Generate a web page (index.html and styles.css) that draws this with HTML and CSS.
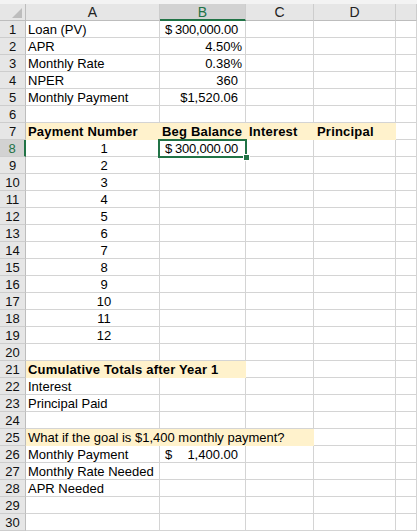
FILE: index.html
```html
<!DOCTYPE html>
<html>
<head>
<meta charset="utf-8">
<link rel="stylesheet" href="styles.css">
</head>
<body>
<div class="top"></div>
<div class="sheet">
  <div class="c h corner"><svg class="tri" width="10" height="10" viewBox="0 0 10 10"><polygon points="10,0 10,10 0,10" fill="#bdbdbd"/></svg></div>
  <div class="c h">A</div><div class="c h selcol">B</div><div class="c h">C</div><div class="c h">D</div><div class="c h"></div>

  <div class="c r">1</div><div class="c">Loan (PV)</div><div class="c acct"><span>$</span><span class="amt">300,000.00</span></div><div class="c"></div><div class="c"></div><div class="c"></div>
  <div class="c r">2</div><div class="c">APR</div><div class="c num pct">4.50%</div><div class="c"></div><div class="c"></div><div class="c"></div>
  <div class="c r">3</div><div class="c">Monthly Rate</div><div class="c num pct">0.38%</div><div class="c"></div><div class="c"></div><div class="c"></div>
  <div class="c r">4</div><div class="c">NPER</div><div class="c num">360</div><div class="c"></div><div class="c"></div><div class="c"></div>
  <div class="c r">5</div><div class="c">Monthly Payment</div><div class="c num">$1,520.06</div><div class="c"></div><div class="c"></div><div class="c"></div>
  <div class="c r">6</div><div class="c"></div><div class="c"></div><div class="c"></div><div class="c"></div><div class="c"></div>
  <div class="c r">7</div><div class="c fill b">Payment Number</div><div class="c fill b">Beg Balance</div><div class="c fill b pl3">Interest</div><div class="c fill b pl3">Principal</div><div class="c"></div>
  <div class="c r selrow">8</div><div class="c ctr">1</div><div class="c acct active"><span>$</span><span class="amt">300,000.00</span><div class="selbox"></div><div class="handle"></div></div><div class="c"></div><div class="c"></div><div class="c"></div>
  <div class="c r">9</div><div class="c ctr">2</div><div class="c"></div><div class="c"></div><div class="c"></div><div class="c"></div>
  <div class="c r">10</div><div class="c ctr">3</div><div class="c"></div><div class="c"></div><div class="c"></div><div class="c"></div>
  <div class="c r">11</div><div class="c ctr">4</div><div class="c"></div><div class="c"></div><div class="c"></div><div class="c"></div>
  <div class="c r">12</div><div class="c ctr">5</div><div class="c"></div><div class="c"></div><div class="c"></div><div class="c"></div>
  <div class="c r">13</div><div class="c ctr">6</div><div class="c"></div><div class="c"></div><div class="c"></div><div class="c"></div>
  <div class="c r">14</div><div class="c ctr">7</div><div class="c"></div><div class="c"></div><div class="c"></div><div class="c"></div>
  <div class="c r">15</div><div class="c ctr">8</div><div class="c"></div><div class="c"></div><div class="c"></div><div class="c"></div>
  <div class="c r">16</div><div class="c ctr">9</div><div class="c"></div><div class="c"></div><div class="c"></div><div class="c"></div>
  <div class="c r">17</div><div class="c ctr">10</div><div class="c"></div><div class="c"></div><div class="c"></div><div class="c"></div>
  <div class="c r">18</div><div class="c ctr">11</div><div class="c"></div><div class="c"></div><div class="c"></div><div class="c"></div>
  <div class="c r">19</div><div class="c ctr">12</div><div class="c"></div><div class="c"></div><div class="c"></div><div class="c"></div>
  <div class="c r">20</div><div class="c"></div><div class="c"></div><div class="c"></div><div class="c"></div><div class="c"></div>
  <div class="c r">21</div><div class="c fill b over">Cumulative Totals after Year 1</div><div class="c fill"></div><div class="c"></div><div class="c"></div><div class="c"></div>
  <div class="c r">22</div><div class="c">Interest</div><div class="c"></div><div class="c"></div><div class="c"></div><div class="c"></div>
  <div class="c r">23</div><div class="c">Principal Paid</div><div class="c"></div><div class="c"></div><div class="c"></div><div class="c"></div>
  <div class="c r">24</div><div class="c"></div><div class="c"></div><div class="c"></div><div class="c"></div><div class="c"></div>
  <div class="c r">25</div><div class="c fill over">What if the goal is $1,400 monthly payment?</div><div class="c fill"></div><div class="c fill"></div><div class="c"></div><div class="c"></div>
  <div class="c r">26</div><div class="c">Monthly Payment</div><div class="c acct"><span>$</span><span>1,400.00</span></div><div class="c"></div><div class="c"></div><div class="c"></div>
  <div class="c r">27</div><div class="c">Monthly Rate Needed</div><div class="c"></div><div class="c"></div><div class="c"></div><div class="c"></div>
  <div class="c r">28</div><div class="c">APR Needed</div><div class="c"></div><div class="c"></div><div class="c"></div><div class="c"></div>
  <div class="c r">29</div><div class="c"></div><div class="c"></div><div class="c"></div><div class="c"></div><div class="c"></div>
  <div class="c r">30</div><div class="c"></div><div class="c"></div><div class="c"></div><div class="c"></div><div class="c"></div>
</div>
</body>
</html>
```
FILE: styles.css
```css
html, body {
  margin: 0;
  padding: 0;
  background: #fff;
}
body {
  font-family: "Liberation Sans", Arial, sans-serif;
  font-size: 13px;
  color: #000;
  overflow: hidden;
}
.top {
  height: 4px;
  background: #f3f3f3;
}
.sheet {
  display: grid;
  grid-template-columns: 26px 134px 86px 68px 82px 21px;
  grid-auto-rows: 17px;
}
.c {
  box-sizing: border-box;
  border-right: 1px solid #d4d4d4;
  border-bottom: 1px solid #d4d4d4;
  padding: 2px 2px 0 2px;
  line-height: 14px;
  white-space: nowrap;
  min-width: 0;
}
.h {
  background: #e6e6e6;
  text-align: center;
  padding: 1px 0 0;
  line-height: 15px;
  font-size: 14px;
  border-right-color: #cdcdcd;
  border-bottom-color: #bdbdbd;
  color: #222;
}
.corner {
  position: relative;
  border-right-color: #bdbdbd;
}
.tri {
  position: absolute;
  right: 3px;
  bottom: 2px;
}
.r {
  background: #e6e6e6;
  text-align: center;
  padding: 2px 0 0;
  border-right-color: #bdbdbd;
  border-bottom-color: #cdcdcd;
  color: #111;
}
.selcol {
  background: #d2d2d2;
  color: #217346;
  border-bottom: 2px solid #217346;
}
.selrow {
  background: #d2d2d2;
  color: #217346;
  border-right: 2px solid #217346;
}
.fill {
  background: #fff2cc;
  border-right-color: #fff2cc;
  border-bottom-color: #fff2cc;
}
.b {
  font-weight: bold;
  letter-spacing: 0.2px;
}
.pl3 {
  padding-left: 3px;
}
.num {
  text-align: right;
  padding-right: 7px;
}
.pct {
  padding-right: 3px;
}
.acct {
  display: flex;
  justify-content: space-between;
  padding: 2px 7px 0 5px;
}
.amt {
  letter-spacing: -0.2px;
}
.ctr {
  text-align: center;
  padding-left: 25px;
}
.over {
  z-index: 1;
  overflow: visible;
}
.active {
  position: relative;
}
.selbox {
  position: absolute;
  left: -2px;
  top: -1px;
  width: 89px;
  height: 19px;
  box-sizing: border-box;
  border: 2px solid #217346;
}
.handle {
  position: absolute;
  left: 83px;
  top: 14px;
  width: 5px;
  height: 5px;
  background: #217346;
  border: 1px solid #fff;
}
```
